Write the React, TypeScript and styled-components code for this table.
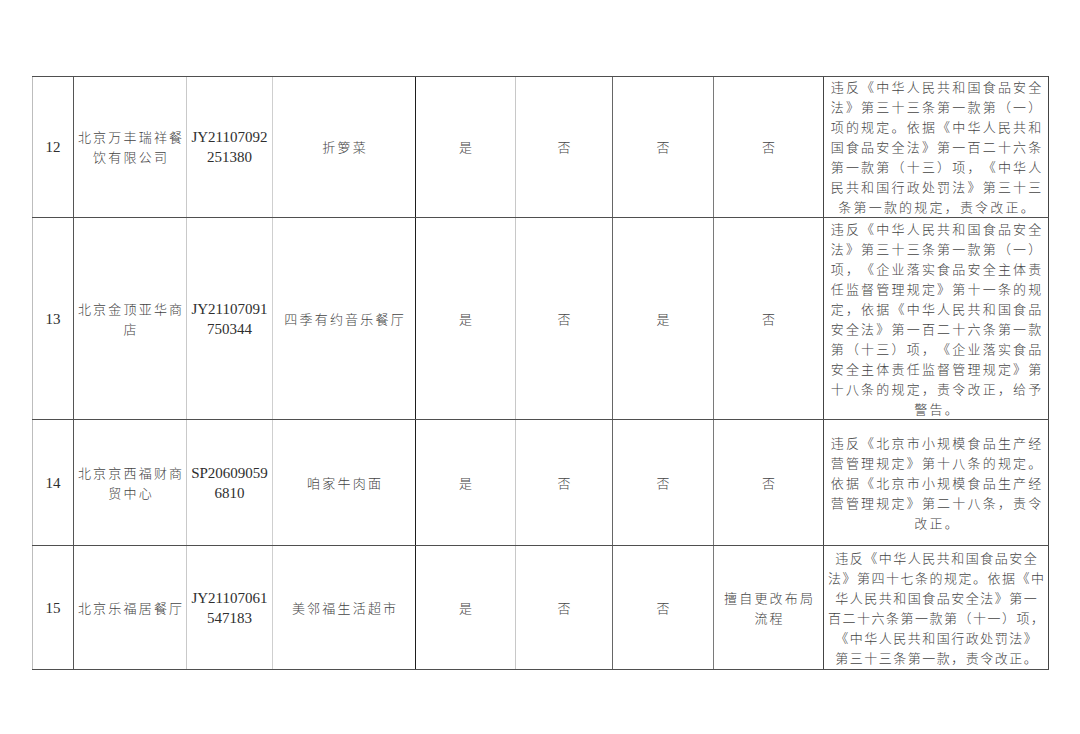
import React from 'react';
import styled, { createGlobalStyle } from 'styled-components';

const GlobalStyle = createGlobalStyle`
  html, body { margin: 0; padding: 0; background: #ffffff; }
  body { font-family: "Liberation Serif", "Noto Sans CJK SC", serif; color: #333; }
`;

const Page = styled.div`
  width: 1080px;
  height: 734px;
  box-sizing: border-box;
  padding: 76px 0 0 32px;
  background: #ffffff;
  overflow: hidden;
`;

const Table = styled.table`
  border-collapse: collapse;
  table-layout: fixed;
  width: 1016px;
`;

const Row = styled.tr<{ $h: number }>`
  height: ${(p) => p.$h}px;
`;

const Cell = styled.td<{ $line: string; $last?: boolean }>`
  padding: 0;
  text-align: center;
  vertical-align: middle;
  border-top: 1px solid #4f4f4f;
  border-bottom: 1px solid #4f4f4f;
  border-left: 1px solid ${(p) => p.$line};
  ${(p) => (p.$last ? 'border-right: 1px solid #444;' : '')}
  line-height: 20px;
  overflow: visible;
`;

const Line = styled.span<{ $ls?: number }>`
  display: block;
  white-space: nowrap;
  font-family: "Noto Sans CJK SC", sans-serif;
  font-size: 13px;
  font-weight: 300;
  color: #444444;
  text-spacing-trim: space-all;
  font-feature-settings: "halt" 0, "chws" 0;
  letter-spacing: ${(p) => p.$ls ?? 2.2}px;
  padding-left: ${(p) => p.$ls ?? 2.2}px;
`;

const Num = styled.span`
  display: block;
  white-space: nowrap;
  font-family: "Liberation Serif", serif;
  font-size: 15px;
  color: #2e2e2e;
`;

const widths = [41, 113, 86, 143, 100, 97, 101, 110, 225];
const lines = ['#bdbdbd', '#555555', '#c9c9c9', '#cfcfcf', '#1e1e1e', '#c8c8c8', '#666666', '#7a7a7a', '#444444'];

type RowData = {
  no: string;
  h: number;
  name: string[];
  lic: string[];
  shop: string;
  a: string;
  b: string;
  c: string;
  d: string[];
  text: string[];
  ls?: number;
};

const rows: RowData[] = [
  {
    no: '12',
    h: 141,
    name: ['北京万丰瑞祥餐', '饮有限公司'],
    lic: ['JY21107092', '251380'],
    shop: '折箩菜',
    a: '是',
    b: '否',
    c: '否',
    d: ['否'],
    text: [
      '违反《中华人民共和国食品安全',
      '法》第三十三条第一款第（一）',
      '项的规定。依据《中华人民共和',
      '国食品安全法》第一百二十六条',
      '第一款第（十三）项，《中华人',
      '民共和国行政处罚法》第三十三',
      '条第一款的规定，责令改正。',
    ],
  },
  {
    no: '13',
    h: 202,
    name: ['北京金顶亚华商', '店'],
    lic: ['JY21107091', '750344'],
    shop: '四季有约音乐餐厅',
    a: '是',
    b: '否',
    c: '是',
    d: ['否'],
    text: [
      '违反《中华人民共和国食品安全',
      '法》第三十三条第一款第（一）',
      '项，《企业落实食品安全主体责',
      '任监督管理规定》第十一条的规',
      '定，依据《中华人民共和国食品',
      '安全法》第一百二十六条第一款',
      '第（十三）项，《企业落实食品',
      '安全主体责任监督管理规定》第',
      '十八条的规定，责令改正，给予',
      '警告。',
    ],
  },
  {
    no: '14',
    h: 126,
    name: ['北京京西福财商', '贸中心'],
    lic: ['SP20609059', '6810'],
    shop: '咱家牛肉面',
    a: '是',
    b: '否',
    c: '否',
    d: ['否'],
    text: [
      '违反《北京市小规模食品生产经',
      '营管理规定》第十八条的规定。',
      '依据《北京市小规模食品生产经',
      '营管理规定》第二十八条，责令',
      '改正。',
    ],
  },
  {
    no: '15',
    h: 124,
    name: ['北京乐福居餐厅'],
    lic: ['JY21107061', '547183'],
    shop: '美邻福生活超市',
    a: '是',
    b: '否',
    c: '否',
    d: ['擅自更改布局', '流程'],
    text: [
      '违反《中华人民共和国食品安全',
      '法》第四十七条的规定。依据《中',
      '华人民共和国食品安全法》第一',
      '百二十六条第一款第（十一）项，',
      '《中华人民共和国行政处罚法》',
      '第三十三条第一款，责令改正。',
    ],
    ls: 1.5,
  },
];

export default function App() {
  return (
    <Page>
      <GlobalStyle />
      <Table>
        <colgroup>
          {widths.map((w, i) => (
            <col key={i} style={{ width: w }} />
          ))}
        </colgroup>
        <tbody>
          {rows.map((r) => (
            <Row key={r.no} $h={r.h}>
              <Cell $line={lines[0]}>
                <Num>{r.no}</Num>
              </Cell>
              <Cell $line={lines[1]}>
                {r.name.map((t) => (
                  <Line key={t}>{t}</Line>
                ))}
              </Cell>
              <Cell $line={lines[2]}>
                {r.lic.map((t) => (
                  <Num key={t}>{t}</Num>
                ))}
              </Cell>
              <Cell $line={lines[3]}>
                <Line>{r.shop}</Line>
              </Cell>
              <Cell $line={lines[4]}>
                <Line>{r.a}</Line>
              </Cell>
              <Cell $line={lines[5]}>
                <Line>{r.b}</Line>
              </Cell>
              <Cell $line={lines[6]}>
                <Line>{r.c}</Line>
              </Cell>
              <Cell $line={lines[7]}>
                {r.d.map((t) => (
                  <Line key={t}>{t}</Line>
                ))}
              </Cell>
              <Cell $line={lines[8]} $last>
                {r.text.map((t, i) => (
                  <Line key={i} $ls={r.ls}>
                    {t}
                  </Line>
                ))}
              </Cell>
            </Row>
          ))}
        </tbody>
      </Table>
    </Page>
  );
}
